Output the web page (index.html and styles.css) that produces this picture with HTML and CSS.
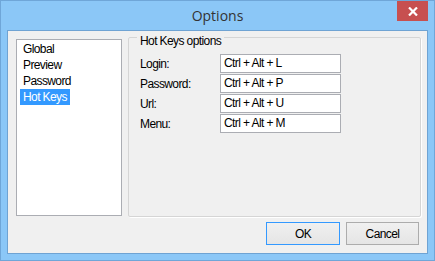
FILE: index.html
```html
<!DOCTYPE html>
<html>
<head>
<meta charset="utf-8">
<link rel="stylesheet" href="styles.css">
</head>
<body>
<div class="window">
  <div class="titlebar">
    <div class="title">Options</div>
    <div class="close"><svg width="10" height="9" viewBox="0 0 10 9"><path d="M1 0.5 L9 8.5 M9 0.5 L1 8.5" stroke="#fff" stroke-width="2.2" fill="none"/></svg></div>
  </div>
  <div class="client">
    <div class="main">
      <div class="listbox">
        <div class="item"><span>Global</span></div>
        <div class="item"><span>Preview</span></div>
        <div class="item"><span>Password</span></div>
        <div class="item selected"><span>Hot Keys</span></div>
      </div>
      <fieldset class="group">
        <legend class="legend">Hot Keys options</legend>
        <div class="rows">
          <div class="label">Login:</div><div class="field">Ctrl + Alt + L</div>
          <div class="label">Password:</div><div class="field">Ctrl + Alt + P</div>
          <div class="label">Url:</div><div class="field">Ctrl + Alt + U</div>
          <div class="label">Menu:</div><div class="field">Ctrl + Alt + M</div>
        </div>
      </fieldset>
    </div>
    <div class="buttons">
      <div class="btn default">OK</div>
      <div class="btn">Cancel</div>
    </div>
  </div>
</div>
</body>
</html>
```

FILE: styles.css
```css
html, body { margin: 0; padding: 0; }
body { width: 435px; height: 261px; overflow: hidden; background: #8bc7f7; }
.window {
  box-sizing: border-box;
  width: 435px; height: 261px;
  border: 1px solid #6fa6d8;
  background: #8bc7f7;
  padding: 0 6px 6px 6px;
  display: flex; flex-direction: column;
  font-family: "Liberation Sans", Arial, sans-serif;
  font-size: 12px;
  letter-spacing: -0.6px;
  color: #000;
}
.titlebar {
  height: 29px;
  display: grid;
  grid-template-columns: 1fr auto 1fr;
  align-items: start;
}
.title {
  grid-column: 2;
  font-family: "Open Sans", "Noto Sans", sans-serif;
  font-size: 14px;
  letter-spacing: 0;
  color: #333;
  line-height: 29px;
}
.close {
  grid-column: 3;
  justify-self: end;
  width: 31px; height: 20px;
  background: #c75050;
  display: flex; align-items: center; justify-content: center;
}
.close svg { display: block; }
.client {
  flex: 1;
  border: 1px solid #6fa3d3;
  background: #f0f0f0;
  display: flex; flex-direction: column;
  padding: 6px 5px 8px 8px;
}
.main { display: flex; align-items: flex-start; gap: 6px; flex: 1; }
.listbox {
  margin-top: 2px;
  box-sizing: border-box;
  width: 106px; height: 177px;
  background: #fff;
  border: 1px solid #abadb3;
  padding: 1px 3px;
}
.item { height: 16px; line-height: 16px; }
.item span { display: inline-block; padding: 0 3px; }
.item.selected span { background: #3399ff; color: #fff; }
.group {
  margin: -10px 0 0 0;
  box-sizing: border-box;
  width: 293px; height: 190px;
  border: 1px solid #d5d5d5;
  border-radius: 2px;
  box-shadow: 1px 1px 0 #fff;
  padding: 0;
  min-inline-size: 0;
}
.legend {
  margin-left: 8px;
  padding: 8px 3px 0 3px;
  line-height: 13px;
}
.rows {
  margin-top: 6px;
  padding-left: 11px;
  display: grid;
  grid-template-columns: 80px 121px;
  grid-auto-rows: 19px;
  row-gap: 1px;
  align-items: center;
}
.label { line-height: 19px; padding-top: 1px; }
.field {
  box-sizing: border-box;
  height: 19px;
  background: #fff;
  border: 1px solid #abadb3;
  padding-left: 3px;
  line-height: 17px;
}
.buttons { display: flex; justify-content: flex-end; gap: 6px; padding-right: 3px; }
.btn {
  box-sizing: border-box;
  width: 73px; height: 23px;
  border: 1px solid #acacac;
  background: linear-gradient(#f0f0f0, #e5e5e5);
  display: flex; align-items: center; justify-content: center;
}
.btn.default { border-color: #3399ff; width: 74px; }
```
